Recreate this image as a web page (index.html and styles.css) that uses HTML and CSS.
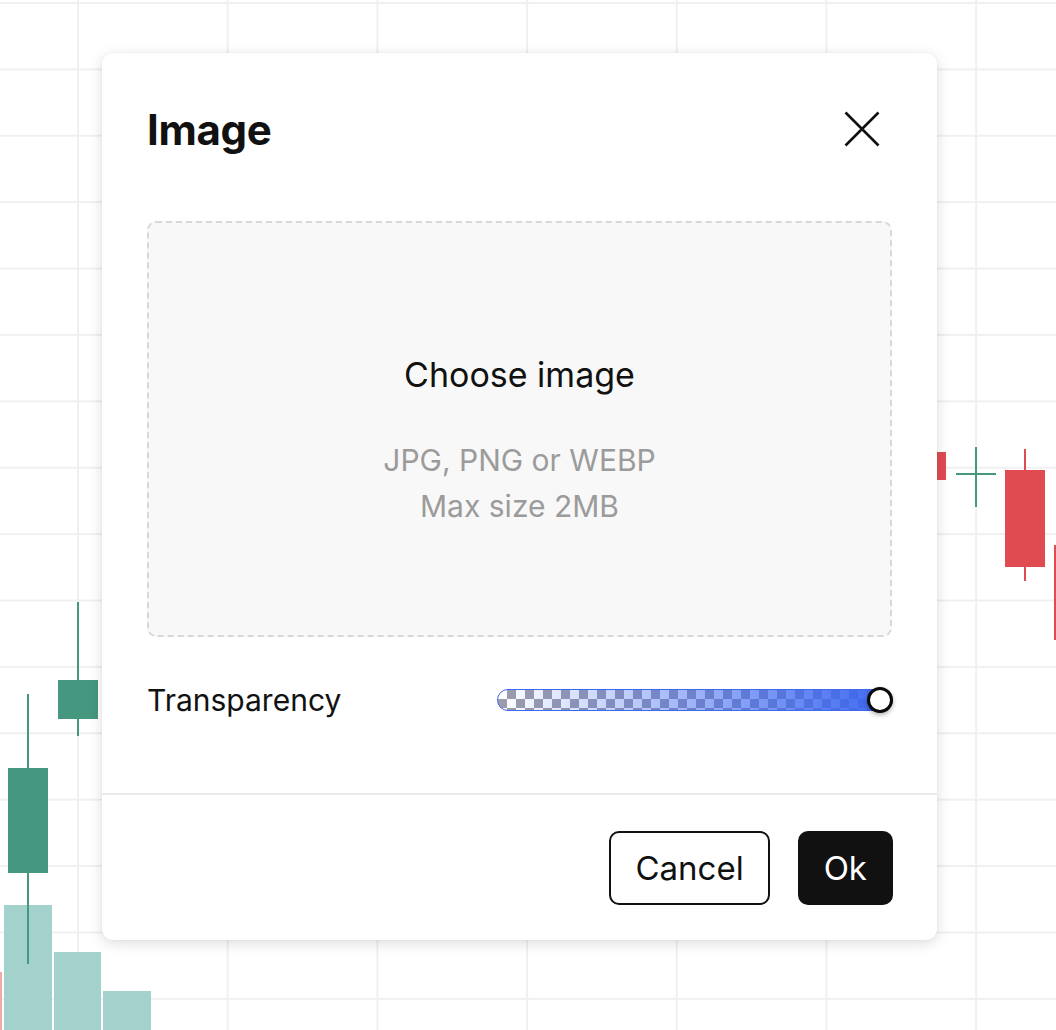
FILE: index.html
```html
<!DOCTYPE html>
<html lang="en">
<head>
<meta charset="utf-8">
<title>Image</title>
<link rel="stylesheet" href="styles.css">
</head>
<body>
<div class="chart">
  <div class="bar vol v1"></div>
  <div class="bar vol v2"></div>
  <div class="bar vol v3"></div>
  <div class="bar vol-red v0"></div>
  <div class="bar up w1"></div>
  <div class="bar up b1"></div>
  <div class="bar up w2"></div>
  <div class="bar up b2"></div>
  <div class="bar down b3"></div>
  <div class="bar up h4"></div>
  <div class="bar up w4"></div>
  <div class="bar down w5"></div>
  <div class="bar down b5"></div>
  <div class="bar down b6"></div>
</div>

<div class="dialog">
  <div class="dialog-body">
    <div class="dialog-header">
      <h1 class="dialog-title">Image</h1>
      <button class="close-btn" aria-label="Close">
        <svg width="36" height="36" viewBox="0 0 36 36"><path d="M1.5 1.5 L34.5 34.5 M34.5 1.5 L1.5 34.5" stroke="#111" stroke-width="2.6" fill="none"/></svg>
      </button>
    </div>
    <div class="dropzone">
      <div class="drop-title">Choose image</div>
      <div class="drop-hint">JPG, PNG or WEBP<br>Max size 2MB</div>
    </div>
    <div class="row">
      <span class="row-label">Transparency</span>
      <div class="slider">
        <div class="track"></div>
        <div class="thumb"></div>
      </div>
    </div>
  </div>
  <div class="dialog-footer">
    <button class="btn btn-outline">Cancel</button>
    <button class="btn btn-solid">Ok</button>
  </div>
</div>
</body>
</html>
```

FILE: styles.css
```css
html, body {
  margin: 0;
  padding: 0;
  width: 1056px;
  height: 1030px;
  overflow: hidden;
  background: #ffffff;
  font-family: "Inter", "Noto Sans", sans-serif;
  color: #111111;
}

.chart {
  position: absolute;
  inset: 0;
  background-image:
    linear-gradient(to right, #f0f0f0 2px, transparent 2px),
    linear-gradient(to bottom, #f0f0f0 2px, transparent 2px);
  background-size: 149.7px 100%, 100% 66.4px;
  background-position: 77px 0, 0 2px;
}

.bar { position: absolute; }
.up { background: #46977f; }
.down { background: #e04b51; }
.vol { background: #a3d2cd; }
.vol-red { background: #eeaaaa; }

.v0 { left: 0; width: 2px; top: 972px; bottom: 0; }
.v1 { left: 4px; width: 48px; top: 905px; bottom: 0; }
.v2 { left: 54px; width: 47px; top: 952px; bottom: 0; }
.v3 { left: 103px; width: 48px; top: 991px; bottom: 0; }

.w1 { left: 27px; width: 2px; top: 694px; height: 270px; }
.b1 { left: 8px; width: 40px; top: 768px; height: 105px; }
.w2 { left: 77px; width: 2px; top: 602px; height: 134px; }
.b2 { left: 58px; width: 40px; top: 680px; height: 39px; }

.b3 { left: 906px; width: 40px; top: 452px; height: 28px; }
.h4 { left: 956px; width: 40px; top: 473px; height: 2px; }
.w4 { left: 975px; width: 2px; top: 447px; height: 60px; }
.w5 { left: 1024px; width: 2px; top: 449px; height: 132px; }
.b5 { left: 1005px; width: 40px; top: 470px; height: 97px; }
.b6 { left: 1054px; width: 40px; top: 545px; height: 95px; }

.dialog {
  position: absolute;
  left: 102px;
  top: 53px;
  width: 835px;
  height: 887px;
  background: #ffffff;
  border-radius: 11px;
  box-shadow: 0 3px 14px rgba(0, 0, 0, 0.14), 0 0 2px rgba(0, 0, 0, 0.06);
  display: flex;
  flex-direction: column;
  box-sizing: border-box;
}

.dialog-body {
  padding: 45px 45px 0;
  flex: 1;
  display: flex;
  flex-direction: column;
  border-bottom: 2px solid #ebebeb;
}

.dialog-header {
  height: 62px;
  display: flex;
  align-items: center;
  justify-content: space-between;
}

.dialog-title {
  margin: 0;
  font-size: 42px;
  font-weight: 700;
  letter-spacing: -0.3px;
  color: #111;
}

.close-btn {
  border: 0;
  background: none;
  padding: 0;
  margin-right: 12px;
  width: 36px;
  height: 36px;
  display: flex;
  align-items: center;
  justify-content: center;
}

.dropzone {
  margin-top: 61px;
  height: 416px;
  box-sizing: border-box;
  padding-top: 26px;
  border: 2px dashed #d8d8d8;
  border-radius: 9px;
  background: #f8f8f8;
  display: flex;
  flex-direction: column;
  align-items: center;
  justify-content: center;
  text-align: center;
}

.drop-title {
  font-size: 34px;
  line-height: 40px;
  color: #111;
}

.drop-hint {
  margin-top: 42px;
  font-size: 30px;
  line-height: 46px;
  color: #9b9b9b;
}

.row {
  margin-top: 43px;
  height: 40px;
  display: flex;
  align-items: center;
  justify-content: space-between;
}

.row-label {
  font-size: 30px;
  color: #111;
}

.slider {
  position: relative;
  width: 396px;
  height: 26px;
  margin-right: -1px;
  display: flex;
  align-items: center;
}

.track {
  width: 100%;
  height: 22px;
  box-sizing: border-box;
  border: 1.5px solid #3f69ef;
  border-radius: 11px;
  background-color: #ffffff;
  background-image:
    linear-gradient(to right, rgba(59, 102, 240, 0), rgba(59, 102, 240, 1)),
    linear-gradient(45deg, #9d9daa 25%, transparent 25%, transparent 75%, #9d9daa 75%),
    linear-gradient(45deg, #9d9daa 25%, transparent 25%, transparent 75%, #9d9daa 75%);
  background-size: 100% 100%, 18px 18px, 18px 18px;
  background-position: 0 0, 0 0, 9px 9px;
}

.thumb {
  position: absolute;
  right: 0;
  top: 0;
  width: 26px;
  height: 26px;
  box-sizing: border-box;
  border: 3.5px solid #0a0a0a;
  border-radius: 50%;
  background: #ffffff;
  box-shadow: 0 2px 4px rgba(0, 0, 0, 0.3);
}

.dialog-footer {
  height: 145px;
  padding: 0 44px 0 45px;
  display: flex;
  align-items: center;
  justify-content: flex-end;
  gap: 28px;
}

.btn {
  height: 74px;
  padding: 0 24px;
  border-radius: 10px;
  font-family: "Inter", "Noto Sans", sans-serif;
  font-size: 33px;
  box-sizing: border-box;
  cursor: pointer;
}

.btn-outline {
  background: #ffffff;
  color: #111;
  border: 2px solid #111;
}

.btn-solid {
  background: #111111;
  color: #ffffff;
  border: 2px solid #111;
}
```
